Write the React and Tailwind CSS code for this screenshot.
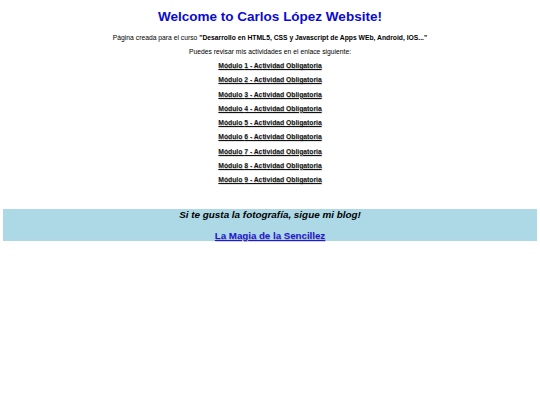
import React from 'react';

const modulos = [1, 2, 3, 4, 5, 6, 7, 8, 9];

export default function App() {
    return (
        <div className="min-h-[405px] bg-white px-[3px] pt-px font-['Liberation_Sans',Arial,sans-serif] text-black">
            <h1 className="mt-[8px] mb-[9px] text-center text-[13.5px] leading-[15.5px] font-bold text-[#0b0bd0]">
                Welcome to Carlos López Website!
            </h1>
            <p className="mb-[6.75px] text-center text-[6.75px] leading-[7.5px]">
                Página creada para el curso{' '}
                <strong>"Desarrollo en HTML5, CSS y Javascript de Apps WEb, Android, IOS..."</strong>
            </p>
            <p className="mb-[6.75px] text-center text-[6.75px] leading-[7.5px]">
                Puedes revisar mis actividades en el enlace siguiente:
            </p>
            {modulos.map((n) => (
                <p key={n} className="mb-[6.75px] text-center text-[6.75px] leading-[7.5px]">
                    <a
                        href="#"
                        className="font-bold text-[#111] underline [text-shadow:0.5px_0.5px_0.5px_#c4c4c4]"
                    >
                        Módulo {n} - Actividad Obligatoria
                    </a>
                </p>
            ))}
            <div className="mt-[25px] bg-[#add8e6] text-center">
                <h2 className="text-[9.9px] leading-[11.5px] font-bold italic">
                    Si te gusta la fotografía, sigue mi blog!
                </h2>
                <p className="mt-[10px] text-[9.7px] leading-[11px]">
                    <a
                        href="#"
                        className="font-bold text-[#1a1ad8] underline [text-shadow:0.5px_0.5px_0.5px_#a8a8b8]"
                    >
                        La Magia de la Sencillez
                    </a>
                </p>
            </div>
        </div>
    );
}
